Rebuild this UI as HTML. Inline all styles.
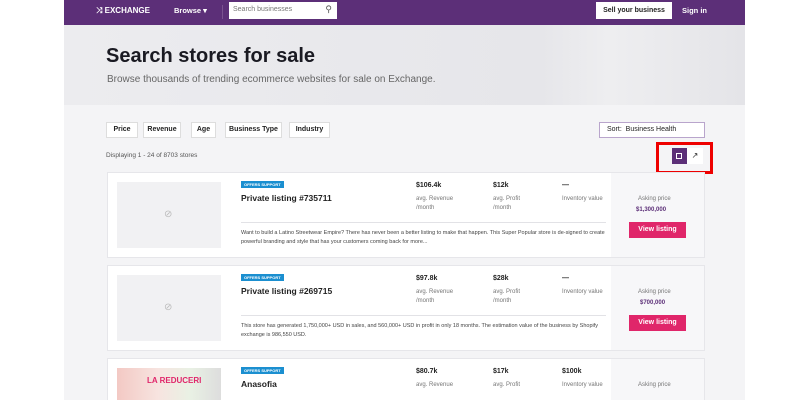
<!DOCTYPE html><html><head><style>
*{margin:0;padding:0;box-sizing:border-box}
html,body{width:800px;height:400px;overflow:hidden}
body{background:#fff;font-family:"Liberation Sans",sans-serif;position:relative;color:#222}
.a{position:absolute}
.nav{left:64px;top:0;width:681px;height:25px;background:#5c2f78}
.hero{left:64px;top:25px;width:681px;height:80px;background:linear-gradient(90deg,#ececef,#e6e6ea 70%,#eeeef0 80%,#e4e4e8)}
.main{left:64px;top:105px;width:681px;height:295px;background:#f4f4f6}
.chip{top:122px;height:16px;background:#fff;border:1px solid #ddd;font-size:7px;font-weight:bold;line-height:14px;text-align:center}
.card{left:107px;width:598px;height:86px;background:#fff;border:1px solid #e6e6ea;overflow:hidden}
.img{left:9px;top:9px;width:104px;height:66px;background:#f1f1f3;overflow:hidden}
.badge{background:#1b8fd0;color:#fff;font-size:4px;font-weight:bold;padding:1px 3px}
.t{font-size:8.5px;font-weight:bold}
.s{font-size:7px;font-weight:bold}
.g{font-size:6px;color:#777;line-height:9px}
.r{right:0;top:0;width:93px;height:84px;background:#f7f7f9}
.btn{background:#e0266a;color:#fff;font-size:7px;font-weight:bold;text-align:center;line-height:16px;width:57px;height:16px;left:18px}
.d{font-size:5.5px;color:#444;line-height:9px;width:365px}
</style></head><body>
<div class="a nav"></div>
<div class="a" style="left:96px;top:6px;color:#fff;font-size:8px;font-weight:bold">⤨ EXCHANGE</div>
<div class="a" style="left:174px;top:6px;color:#fff;font-size:7.5px;font-weight:bold">Browse ▾</div>
<div class="a" style="left:222px;top:5px;width:1px;height:14px;background:#7a5290"></div>
<div class="a" style="left:229px;top:2px;width:108px;height:17px;background:#fff;font-size:7px;color:#777;padding:4px 4px">Search businesses<span style="position:absolute;right:5px;top:2px;font-size:9px;color:#555">⚲</span></div>
<div class="a" style="left:596px;top:2px;width:76px;height:17px;background:#fff;font-size:7px;font-weight:bold;text-align:center;line-height:17px">Sell your business</div>
<div class="a" style="left:682px;top:6px;color:#fff;font-size:7.5px;font-weight:bold">Sign in</div>
<div class="a hero"></div>
<div class="a" style="left:106px;top:45px;font-size:20px;font-weight:bold;color:#1a1a22">Search stores for sale</div>
<div class="a" style="left:107px;top:74px;font-size:10px;color:#666">Browse thousands of trending ecommerce websites for sale on Exchange.</div>
<div class="a main"></div>
<div class="a chip" style="left:106px;width:32px">Price</div>
<div class="a chip" style="left:143px;width:38px">Revenue</div>
<div class="a chip" style="left:191px;width:25px">Age</div>
<div class="a chip" style="left:225px;width:57px">Business Type</div>
<div class="a chip" style="left:289px;width:41px">Industry</div>
<div class="a chip" style="left:599px;width:106px;border-color:#b9a5cc;text-align:left;padding-left:7px;font-weight:normal">Sort:&nbsp; Business Health</div>
<div class="a" style="left:106px;top:152px;font-size:6.5px;color:#555">Displaying 1 - 24 of 8703 stores</div>
<div class="a" style="left:656px;top:142px;width:57px;height:32px;border:3px solid #e00"></div>
<div class="a" style="left:672px;top:148px;width:15px;height:16px;background:#5c2f78"></div>
<div class="a" style="left:676px;top:153px;width:6px;height:6px;border:1px solid #fff"></div>
<div class="a" style="left:687px;top:148px;width:16px;height:16px;background:#fff;font-size:8px;text-align:center;line-height:16px">↗</div>

<div class="a card" style="top:172px">
<div class="a img"><span class="a" style="left:47px;top:27px;color:#bbb;font-size:10px">⊘</span></div>
<div class="a badge" style="left:133px;top:8px">OFFERS SUPPORT</div>
<div class="a t" style="left:133px;top:20px">Private listing #735711</div>
<div class="a s" style="left:308px;top:9px">$106.4k</div><div class="a g" style="left:308px;top:22px">avg. Revenue<br>/month</div>
<div class="a s" style="left:385px;top:9px">$12k</div><div class="a g" style="left:385px;top:22px">avg. Profit<br>/month</div>
<div class="a s" style="left:454px;top:9px">—</div><div class="a g" style="left:454px;top:22px">Inventory value</div>
<div class="a" style="left:133px;top:49px;width:365px;height:1px;background:#e2e2e6"></div>
<div class="a d" style="left:133px;top:56px">Want to build a Latino Streetwear Empire? There has never been a better listing to make that happen. This Super Popular store is de-signed to create powerful branding and style that has your customers coming back for more...</div>
<div class="a r"><div class="a g" style="left:27px;top:22px">Asking price</div><div class="a" style="left:25px;top:34px;font-size:6px;font-weight:bold;color:#5c2f78">$1,300,000</div><div class="a btn" style="top:49px">View listing</div></div>
</div>

<div class="a card" style="top:265px">
<div class="a img"><span class="a" style="left:47px;top:27px;color:#bbb;font-size:10px">⊘</span></div>
<div class="a badge" style="left:133px;top:8px">OFFERS SUPPORT</div>
<div class="a t" style="left:133px;top:20px">Private listing #269715</div>
<div class="a s" style="left:308px;top:9px">$97.8k</div><div class="a g" style="left:308px;top:22px">avg. Revenue<br>/month</div>
<div class="a s" style="left:385px;top:9px">$28k</div><div class="a g" style="left:385px;top:22px">avg. Profit<br>/month</div>
<div class="a s" style="left:454px;top:9px">—</div><div class="a g" style="left:454px;top:22px">Inventory value</div>
<div class="a" style="left:133px;top:49px;width:365px;height:1px;background:#e2e2e6"></div>
<div class="a d" style="left:133px;top:56px">This store has generated 1,750,000+ USD in sales, and 560,000+ USD in profit in only 18 months. The estimation value of the business by Shopify exchange is 986,550 USD.</div>
<div class="a r"><div class="a g" style="left:27px;top:22px">Asking price</div><div class="a" style="left:29px;top:34px;font-size:6px;font-weight:bold;color:#5c2f78">$700,000</div><div class="a btn" style="top:49px">View listing</div></div>
</div>

<div class="a card" style="top:358px;height:42px;border-bottom:none">
<div class="a img" style="height:40px;background:linear-gradient(90deg,#f3c9c4,#f7e4e0 40%,#e9f1e4 70%,#ddd)"><span class="a" style="left:30px;top:8px;color:#e0266a;font-size:8px;font-weight:bold">LA REDUCERI</span></div>
<div class="a badge" style="left:133px;top:8px">OFFERS SUPPORT</div>
<div class="a t" style="left:133px;top:20px">Anasofia</div>
<div class="a s" style="left:308px;top:9px">$80.7k</div><div class="a g" style="left:308px;top:22px">avg. Revenue</div>
<div class="a s" style="left:385px;top:9px">$17k</div><div class="a g" style="left:385px;top:22px">avg. Profit</div>
<div class="a s" style="left:454px;top:9px">$100k</div><div class="a g" style="left:454px;top:22px">Inventory value</div>
<div class="a r" style="height:42px"><div class="a g" style="left:27px;top:22px">Asking price</div></div>
</div>
</body></html>
